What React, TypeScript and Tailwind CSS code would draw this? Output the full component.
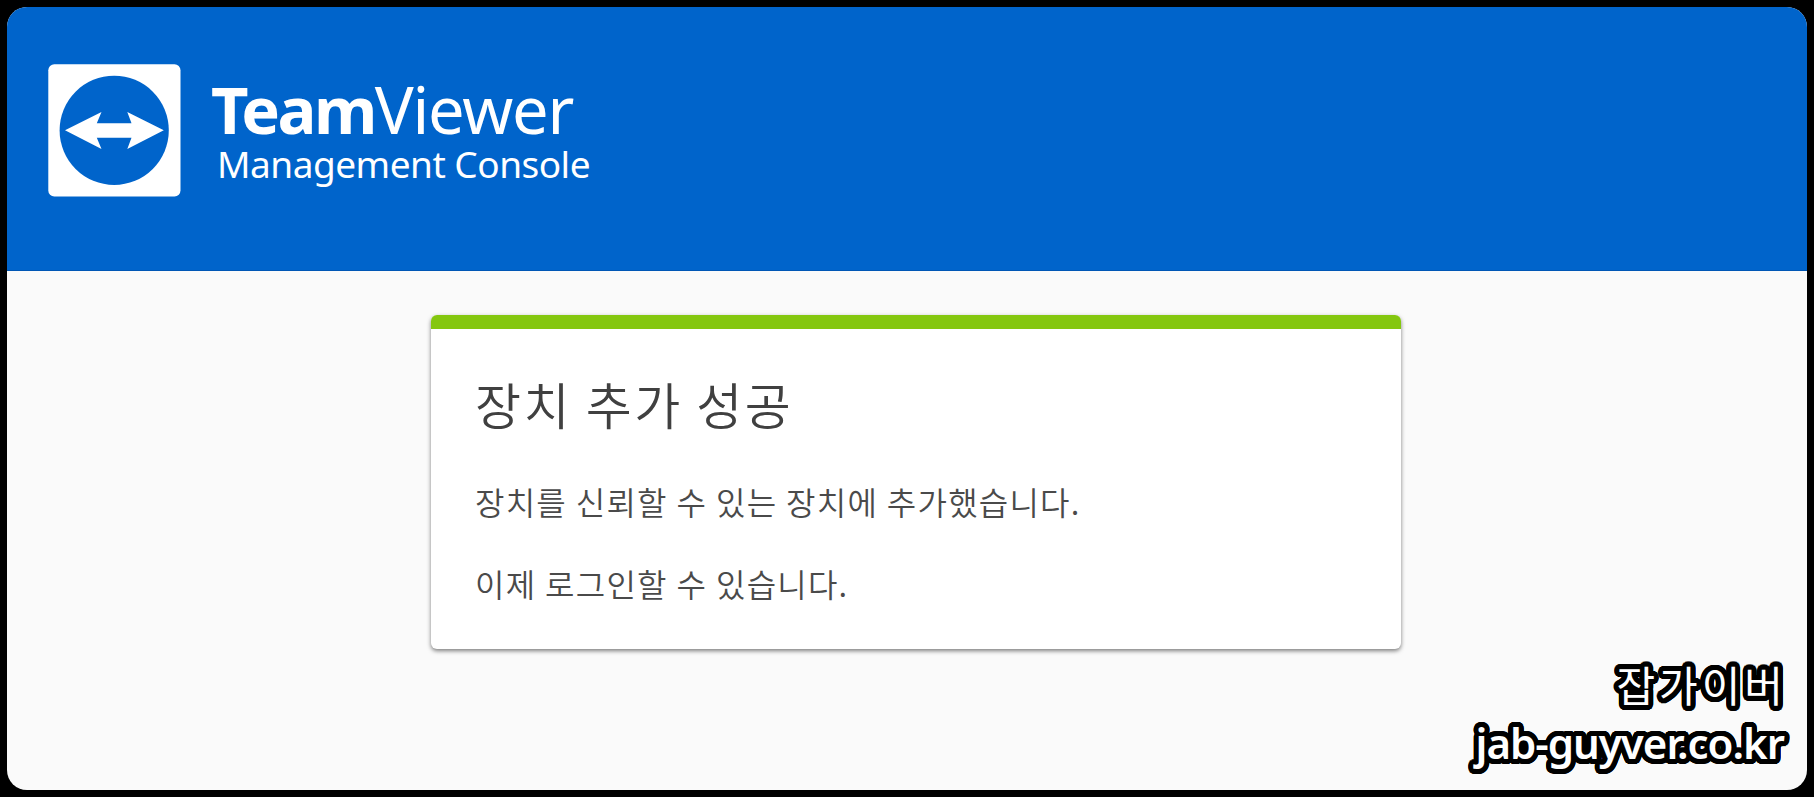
const messages = [
  "장치를 신뢰할 수 있는 장치에 추가했습니다.",
  "이제 로그인할 수 있습니다.",
];

// Ring of hard shadows, gives the watermark a round-cornered outline
const OUTLINE_WIDTH = 5;
const outline = Array.from({ length: 32 }, (_, i) => {
  const angle = (i / 32) * Math.PI * 2;
  const x = (Math.cos(angle) * OUTLINE_WIDTH).toFixed(2);
  const y = (Math.sin(angle) * OUTLINE_WIDTH).toFixed(2);
  return `${x}px ${y}px 0 #000`;
})
  .concat(["2px 0 0 #000", "-2px 0 0 #000", "0 2px 0 #000", "0 -2px 0 #000"])
  .join(", ");

function TeamViewerMark() {
  return (
    <svg width="133" height="133" viewBox="0 0 133 133" fill="none" aria-label="TeamViewer" className="shrink-0">
      <rect x="0.3" y="0.3" width="132.2" height="132.2" rx="6" fill="white" />
      <circle cx="66.2" cy="66.3" r="54.6" fill="#0064CB" />
      <path d="M17 66.3 53.5 48 48.8 59.3H83.5L79.3 48 115.8 66.3 79.3 85 83.5 73.7H48.8L53.5 85Z" fill="white" />
    </svg>
  );
}

function Header() {
  return (
    <header className="flex h-[264px] items-start gap-[30px] border-b border-[#0057b5] bg-[#0064cb] pt-[57px] pl-[41px] text-white">
      <TeamViewerMark />
      <div className="pt-[9px] font-['Noto_Sans','Open_Sans',sans-serif] whitespace-nowrap">
        <div className="text-[65px] leading-[72px]">
          <span className="font-bold tracking-[-2.6px]">Team</span>
          <span className="tracking-[-1.2px]">Viewer</span>
        </div>
        <div className="-mt-[3px] pl-[6px] text-[37px] leading-[44px] tracking-[-0.5px]">Management Console</div>
      </div>
    </header>
  );
}

function SuccessCard() {
  return (
    <section className="mx-auto mt-[44px] h-[334px] w-[970px] overflow-hidden rounded-[6px] bg-white font-['Noto_Sans_CJK_KR',sans-serif] shadow-[0_2px_4px_rgba(0,0,0,0.5)]">
      <div className="h-[14px] bg-[#84c70f]" />
      <div className="pt-[42px] pl-[44px] whitespace-nowrap">
        <h1 className="text-[50px] leading-[64px] font-[350] tracking-[2.5px] text-[#404040]">장치 추가 성공</h1>
        <div className="mt-[42px] flex flex-col gap-[34px]">
          {messages.map((message) => (
            <p key={message} className="text-[32px] leading-[48px] font-[350] tracking-[1.2px] text-[#4a4a4a] [word-spacing:0.5px]">
              {message}
            </p>
          ))}
        </div>
      </div>
    </section>
  );
}

function Watermark() {
  return (
    <div
      className="absolute right-[23px] bottom-[18px] text-right font-['Noto_Sans','Noto_Sans_CJK_KR',sans-serif] text-white"
      style={{ textShadow: outline }}
    >
      <div className="-mr-[3px] text-[42px] leading-[56px] tracking-[4px]">잡가이버</div>
      <div className="text-[42px] leading-[58px] font-semibold tracking-[-1px]">jab-guyver.co.kr</div>
    </div>
  );
}

export default function App() {
  return (
    <div className="h-[797px] w-[1814px] bg-black p-[7px]">
      <main className="relative h-[783px] w-[1800px] overflow-hidden rounded-[20px] bg-[#fafafa]">
        <Header />
        <div className="pl-[18px]">
          <SuccessCard />
        </div>
        <Watermark />
      </main>
    </div>
  );
}
